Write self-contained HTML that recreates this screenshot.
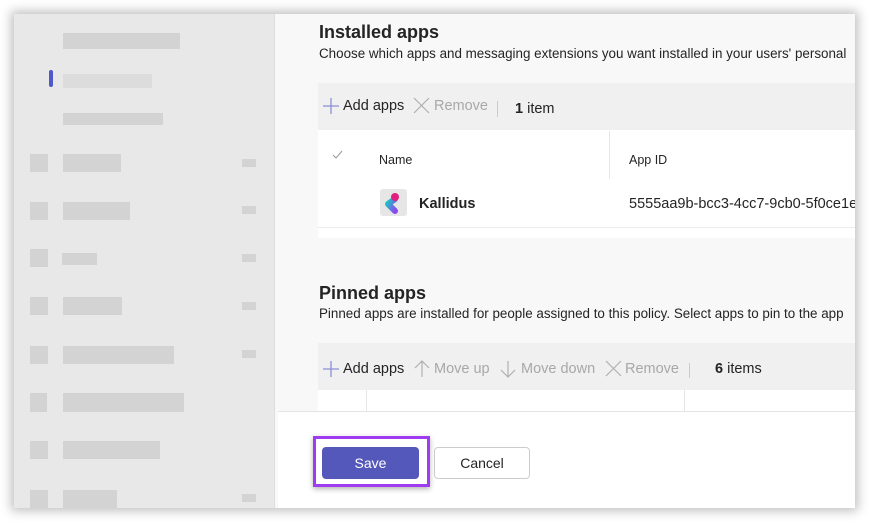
<!DOCTYPE html>
<html><head><style>
*{margin:0;padding:0;box-sizing:border-box}
body{width:869px;height:524px;background:#fff;position:relative;overflow:hidden;font-family:"Liberation Sans",sans-serif;color:#242424}
.a{position:absolute}
.win{left:14px;top:14px;width:841px;height:494px;background:#f8f8f8;box-shadow:0 0 10px 3px rgba(0,0,0,.25)}
.side{left:14px;top:14px;width:261px;height:494px;background:#e8e8e8;border-right:1px solid #ddd}
.g{background:#d3d3d3}
.t{font-size:13px;white-space:nowrap}
.dis{color:#a8a8a8}
svg{position:absolute}
</style></head><body>
<div class="a win"></div>
<div class="a side"></div>
<div class="a g" style="left:63px;top:33px;width:117px;height:16px"></div>
<div class="a" style="left:49px;top:70px;width:4px;height:17px;background:#5158c8;border-radius:2px"></div>
<div class="a" style="left:63px;top:74px;width:89px;height:14px;background:#dcdcdc"></div>
<div class="a g" style="left:63px;top:113px;width:100px;height:12px"></div>

<div class="a g" style="left:30px;top:154px;width:18px;height:18px"></div><div class="a g" style="left:63px;top:154px;width:58px;height:18px"></div><div class="a g" style="left:242px;top:159px;width:14px;height:8px"></div>
<div class="a g" style="left:30px;top:202px;width:18px;height:18px"></div><div class="a g" style="left:63px;top:202px;width:67px;height:18px"></div><div class="a g" style="left:242px;top:206px;width:14px;height:8px"></div>
<div class="a g" style="left:30px;top:249px;width:18px;height:18px"></div><div class="a g" style="left:62px;top:253px;width:35px;height:12px"></div><div class="a g" style="left:242px;top:254px;width:14px;height:8px"></div>
<div class="a g" style="left:30px;top:297px;width:18px;height:18px"></div><div class="a g" style="left:63px;top:297px;width:59px;height:18px"></div><div class="a g" style="left:242px;top:302px;width:14px;height:8px"></div>
<div class="a g" style="left:30px;top:346px;width:18px;height:18px"></div><div class="a g" style="left:63px;top:346px;width:111px;height:18px"></div><div class="a g" style="left:242px;top:350px;width:14px;height:8px"></div>
<div class="a g" style="left:30px;top:393px;width:17px;height:19px"></div><div class="a g" style="left:63px;top:393px;width:121px;height:19px"></div>
<div class="a g" style="left:30px;top:441px;width:18px;height:18px"></div><div class="a g" style="left:63px;top:441px;width:97px;height:18px"></div>
<div class="a g" style="left:30px;top:490px;width:18px;height:18px"></div><div class="a g" style="left:63px;top:490px;width:54px;height:18px"></div><div class="a g" style="left:242px;top:494px;width:14px;height:8px"></div>

<div class="a" style="left:319px;top:22px;font-size:18px;font-weight:bold">Installed apps</div>
<div class="a t" style="left:319px;top:46px;width:536px;overflow:hidden;font-size:13.4px">Choose which apps and messaging extensions you want installed in your users' personal</div>
<div class="a" style="left:318px;top:83px;width:537px;height:155px;background:#fff"></div>
<div class="a" style="left:318px;top:83px;width:537px;height:47px;background:#f0f0f0"></div>
<svg style="left:322px;top:97px" width="18" height="18"><path d="M9 1V17M1 9H17" stroke="#8b8fd8" stroke-width="1.3"/></svg>
<div class="a t" style="left:343px;top:98px;font-size:14.5px">Add apps</div>
<svg style="left:413px;top:97px" width="17" height="17"><path d="M1 1L16 16M16 1L1 16" stroke="#b0b0b0" stroke-width="1.2"/></svg>
<div class="a t dis" style="left:434px;top:98px;font-size:14.5px">Remove</div>
<div class="a" style="left:497px;top:101px;width:1px;height:16px;background:#ccc"></div>
<div class="a t" style="left:515px;top:101px;font-size:14.5px"><b>1</b> item</div>
<svg style="left:332px;top:150px" width="11" height="9"><path d="M1 5L4 8L10 1" stroke="#999" fill="none" stroke-width="1"/></svg>
<div class="a t" style="left:379px;top:153px;font-size:12.5px">Name</div>
<div class="a" style="left:609px;top:131px;width:1px;height:48px;background:#e6e6e6"></div>
<div class="a t" style="left:629px;top:153px;font-size:12.5px">App ID</div>
<div class="a" style="left:380px;top:189px;width:27px;height:27px;background:#e6e6e6;border-radius:3px"></div>
<svg style="left:380px;top:189px" width="27" height="27">
<defs><linearGradient id="k" x1="0" y1="0" x2="1" y2="1"><stop offset="0" stop-color="#18c8c0"/><stop offset="1" stop-color="#8a48f0"/></linearGradient></defs>
<path d="M15 10L8 15L15 22" stroke="url(#k)" stroke-width="6" stroke-linecap="round" stroke-linejoin="round" fill="none"/>
<circle cx="15" cy="8" r="4" fill="#e0207e"/></svg>
<div class="a t" style="left:419px;top:196px;font-size:14.5px;font-weight:bold">Kallidus</div>
<div class="a t" style="left:629px;top:196px;font-size:14.5px;width:226px;overflow:hidden">5555aa9b-bcc3-4cc7-9cb0-5f0ce1e3!</div>
<div class="a" style="left:318px;top:227px;width:537px;height:1px;background:#ececec"></div>

<div class="a" style="left:319px;top:283px;font-size:18px;font-weight:bold">Pinned apps</div>
<div class="a t" style="left:319px;top:306px;width:536px;overflow:hidden;font-size:13.4px">Pinned apps are installed for people assigned to this policy. Select apps to pin to the app</div>
<div class="a" style="left:318px;top:343px;width:537px;height:47px;background:#f0f0f0"></div>
<div class="a" style="left:318px;top:390px;width:537px;height:21px;background:#fff"></div>
<div class="a" style="left:366px;top:390px;width:1px;height:21px;background:#e6e6e6"></div>
<div class="a" style="left:684px;top:390px;width:1px;height:21px;background:#e6e6e6"></div>
<svg style="left:322px;top:360px" width="18" height="18"><path d="M9 1V17M1 9H17" stroke="#8b8fd8" stroke-width="1.3"/></svg>
<div class="a t" style="left:343px;top:361px;font-size:14.5px">Add apps</div>
<svg style="left:414px;top:360px" width="16" height="18"><path d="M8 1V17M1 8L8 1L15 8" stroke="#b0b0b0" fill="none" stroke-width="1.2"/></svg>
<div class="a t dis" style="left:434px;top:361px;font-size:14.5px">Move up</div>
<svg style="left:500px;top:360px" width="16" height="18"><path d="M8 1V17M1 10L8 17L15 10" stroke="#b0b0b0" fill="none" stroke-width="1.2"/></svg>
<div class="a t dis" style="left:521px;top:361px;font-size:14.5px">Move down</div>
<svg style="left:605px;top:360px" width="17" height="17"><path d="M1 1L16 16M16 1L1 16" stroke="#b0b0b0" stroke-width="1.2"/></svg>
<div class="a t dis" style="left:625px;top:361px;font-size:14.5px">Remove</div>
<div class="a" style="left:689px;top:363px;width:1px;height:15px;background:#ccc"></div>
<div class="a t" style="left:715px;top:361px;font-size:14.5px"><b>6</b> items</div>

<div class="a" style="left:278px;top:411px;width:577px;height:97px;background:#fff;border-top:1px solid #e4e4e4"></div>
<div class="a" style="left:313px;top:436px;width:117px;height:51px;border:3px solid #a03cf0;box-shadow:0 2px 5px rgba(0,0,0,.3);background:#fff"></div>
<div class="a" style="left:322px;top:447px;width:97px;height:32px;background:#5558bb;border-radius:4px;color:#fff;font-size:14px;text-align:center;line-height:32px">Save</div>
<div class="a" style="left:434px;top:447px;width:96px;height:32px;border:1px solid #ccc;border-radius:4px;font-size:14px;text-align:center;line-height:30px;background:#fff">Cancel</div>
</body></html>
